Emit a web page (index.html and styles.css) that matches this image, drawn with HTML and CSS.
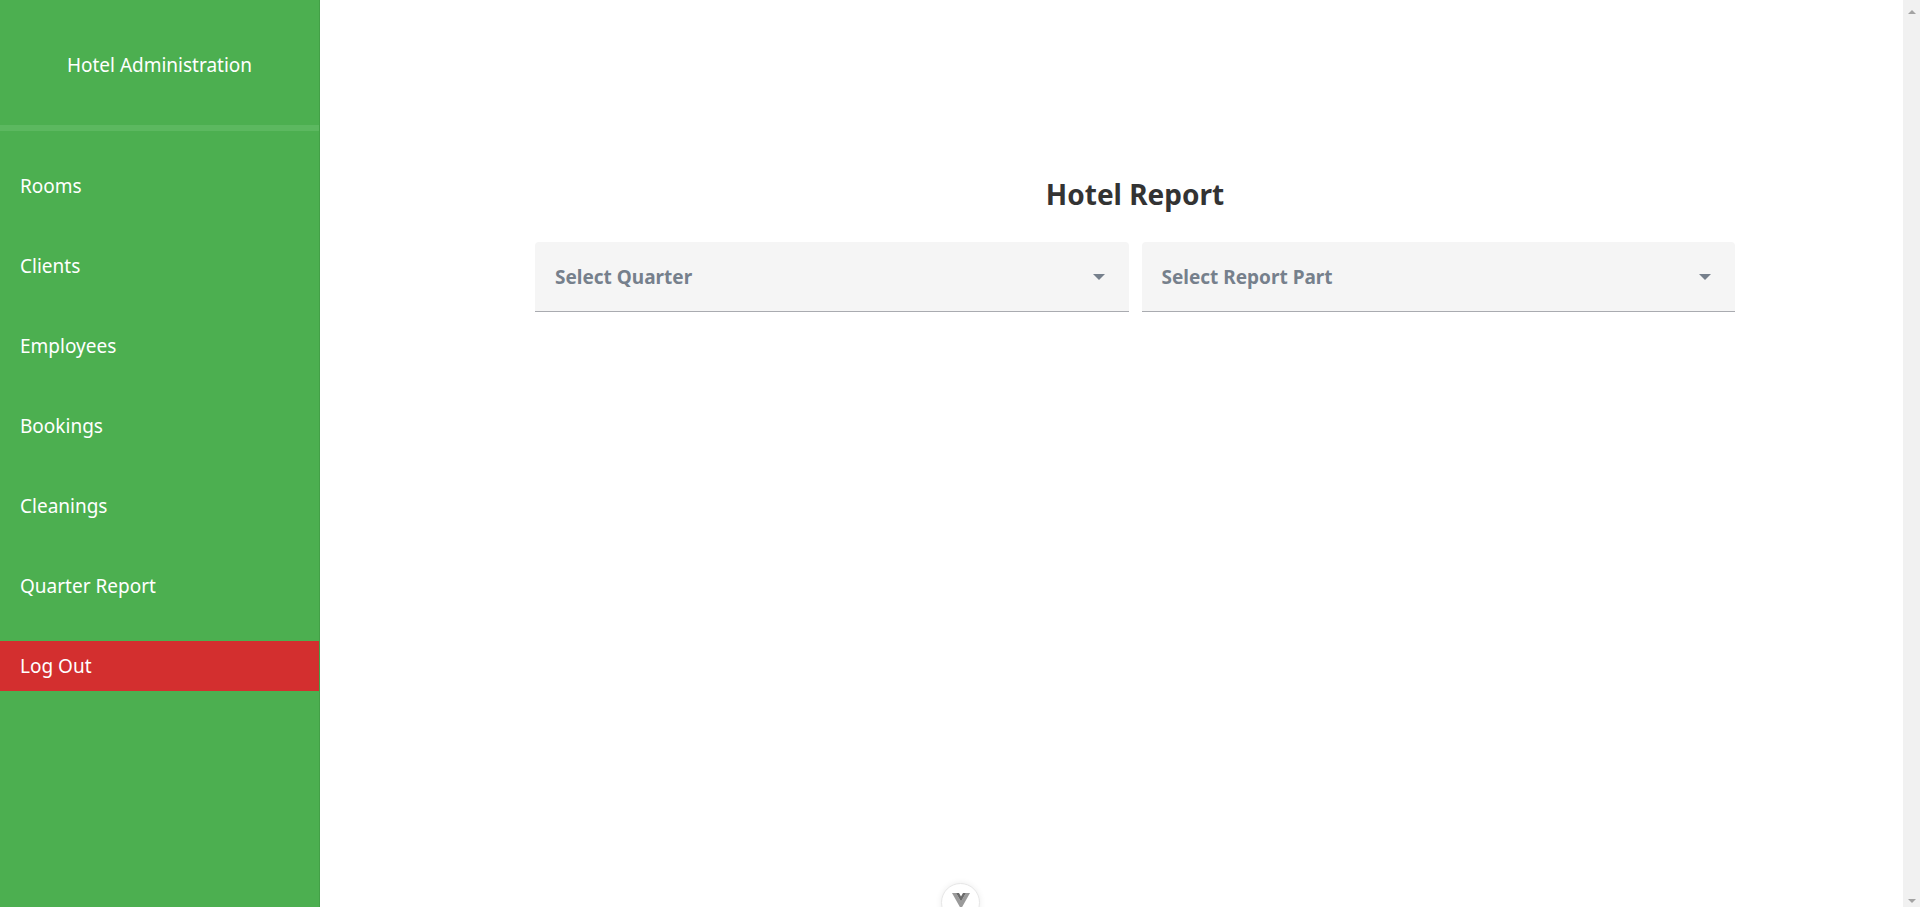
FILE: index.html
```html
<!DOCTYPE html>
<html lang="en">
<head>
<meta charset="utf-8">
<title>Hotel Administration</title>
<link rel="stylesheet" href="styles.css">
</head>
<body>
<div class="app">
  <aside class="sidebar">
    <div class="brand">Hotel Administration</div>
    <div class="divider"></div>
    <nav class="nav">
      <a class="nav-item">Rooms</a>
      <a class="nav-item">Clients</a>
      <a class="nav-item">Employees</a>
      <a class="nav-item">Bookings</a>
      <a class="nav-item">Cleanings</a>
      <a class="nav-item">Quarter Report</a>
      <a class="nav-item logout">Log Out</a>
    </nav>
  </aside>
  <main class="main">
    <div class="container">
      <h1 class="title">Hotel Report</h1>
      <div class="selects">
        <div class="select">
          <span class="select-label">Select Quarter</span>
          <span class="caret"></span>
        </div>
        <div class="select">
          <span class="select-label">Select Report Part</span>
          <span class="caret"></span>
        </div>
      </div>
    </div>
  </main>
  <div class="scrollbar">
    <span class="sb-arrow sb-up"></span>
    <span class="sb-arrow sb-down"></span>
  </div>
</div>
<div class="devtools">
  <svg width="18" height="16" viewBox="0 0 18 16"><path d="M0 0h4l5 8.5L14 0h4L9 16z" fill="#9a9a9a"/><path d="M4 0h3l2 3.5L11 0h3L9 8.5z" fill="#6a6a6a"/></svg>
</div>
</body>
</html>
```
FILE: styles.css
```css
* { box-sizing: border-box; }
html, body { margin: 0; padding: 0; }
body {
  font-family: "Noto Sans", "Open Sans", sans-serif;
  background: #ffffff;
  color: #333333;
  overflow: hidden;
}
.app {
  display: flex;
  height: 100vh;
}
.sidebar {
  width: 320px;
  flex-shrink: 0;
  background: #4caf50;
  border-right: 1px solid #43a047;
}
.brand {
  height: 125px;
  display: flex;
  align-items: center;
  justify-content: center;
  color: #ffffff;
  font-size: 19px;
  padding-top: 4px;
}
.divider {
  height: 6px;
  background: #5cb860;
}
.nav {
  display: flex;
  flex-direction: column;
  gap: 30px;
  padding-top: 30px;
}
.nav-item {
  height: 50px;
  display: flex;
  align-items: center;
  padding-left: 20px;
  color: #ffffff;
  font-size: 19px;
  cursor: pointer;
}
.logout {
  background: #d32f2f;
}
.main {
  flex: 1;
  padding-left: 47px;
  padding-top: 166px;
}
.container {
  width: 1200px;
  margin: 0 auto;
}
.title {
  margin: 0 0 20px;
  text-align: center;
  font-size: 28px;
  font-weight: 700;
  color: #333333;
  line-height: 56px;
  height: 56px;
}
.selects {
  display: grid;
  grid-template-columns: 1fr 1fr;
  gap: 13px;
}
.select {
  height: 70px;
  background: #f5f5f5;
  border-radius: 4px 4px 0 0;
  border-bottom: 1px solid #a9abb0;
  display: flex;
  align-items: center;
  justify-content: space-between;
  padding: 0 24px 0 20px;
}
.select-label {
  font-size: 19px;
  font-weight: 700;
  color: #76808c;
}
.caret {
  width: 0;
  height: 0;
  border-left: 6px solid transparent;
  border-right: 6px solid transparent;
  border-top: 6px solid #76808c;
}
.scrollbar {
  width: 17px;
  flex-shrink: 0;
  background: #f1f1f1;
  display: flex;
  flex-direction: column;
  justify-content: space-between;
  align-items: center;
  padding: 10px 0 4px;
}
.sb-arrow {
  width: 0;
  height: 0;
  border-left: 4px solid transparent;
  border-right: 4px solid transparent;
}
.sb-up { border-bottom: 4px solid #a3a3a3; }
.sb-down { border-top: 4px solid #a3a3a3; }
.devtools {
  position: fixed;
  left: 941px;
  top: 883px;
  width: 39px;
  height: 39px;
  border-radius: 50%;
  background: #ffffff;
  border: 1px solid #e6e6e6;
  box-shadow: 0 0 6px rgba(0,0,0,0.08);
  display: flex;
  justify-content: center;
  padding-top: 9px;
}
```
